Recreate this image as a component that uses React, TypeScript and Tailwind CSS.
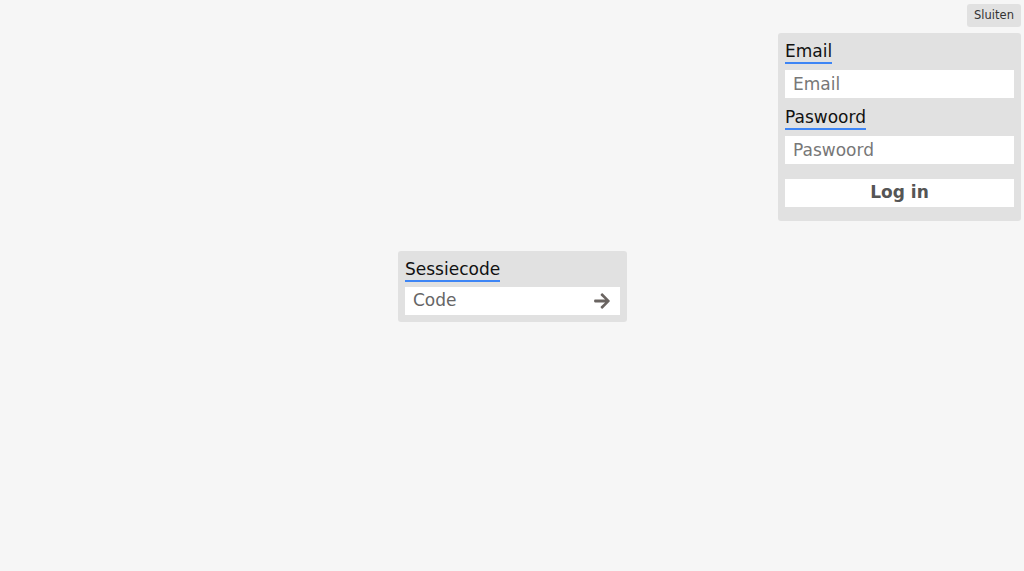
import { useState } from "react";

const font = { fontFamily: '"DejaVu Sans", "Liberation Sans", sans-serif' };

function Label({ children }: { children: string }) {
  return (
    <div>
      <span className="inline-block border-b-2 border-[#3d85f5] text-[17px] leading-[21px] text-[#111]">
        {children}
      </span>
    </div>
  );
}

export default function App() {
  const [code, setCode] = useState("");
  const [email, setEmail] = useState("");
  const [password, setPassword] = useState("");

  return (
    <div className="relative min-h-screen bg-[#f6f6f6]" style={font}>
      {/* login dropdown, top right */}
      <div className="absolute right-[3px] top-[4px] flex w-[243px] flex-col items-end gap-[6px]">
        <button className="h-[23px] w-[54px] rounded-[3px] bg-[#e1e1e1] text-[11.5px] text-[#333]">
          Sluiten
        </button>
        <div className="w-full rounded-[3px] bg-[#e1e1e1] px-[7px] pb-[14px] pt-[7px]">
          <Label>Email</Label>
          <input
            value={email}
            onChange={(e) => setEmail(e.target.value)}
            placeholder="Email"
            className="mt-[6px] block h-[28px] w-full bg-white px-[8px] text-[17px] text-[#333] outline-none placeholder:text-[#777]"
          />
          <div className="mt-[8px]">
            <Label>Paswoord</Label>
          </div>
          <input
            type="password"
            value={password}
            onChange={(e) => setPassword(e.target.value)}
            placeholder="Paswoord"
            className="mt-[6px] block h-[28px] w-full bg-white px-[8px] text-[17px] text-[#333] outline-none placeholder:text-[#777]"
          />
          <button className="mt-[15px] block h-[28px] w-full bg-white text-[17px] font-bold text-[#555]">
            Log in
          </button>
        </div>
      </div>

      {/* session code */}
      <div className="flex min-h-screen items-center justify-center">
        <div className="ml-px mt-[2px] w-[229px] rounded-[3px] bg-[#e1e1e1] p-[7px]">
          <Label>Sessiecode</Label>
          <div className="mt-[5px] flex h-[28px] items-center bg-white pl-[8px] pr-[10px]">
            <input
              value={code}
              onChange={(e) => setCode(e.target.value)}
              placeholder="Code"
              className="min-w-0 flex-1 bg-transparent text-[17px] text-[#333] outline-none placeholder:text-[#666]"
            />
            <svg viewBox="0 0 448 512" className="h-[18px] w-[16px] fill-[#6a6461]">
              <path d="M190.5 66.9l22.2-22.2c9.4-9.4 24.6-9.4 33.9 0L441 239c9.4 9.4 9.4 24.6 0 33.9L246.6 467.3c-9.4 9.4-24.6 9.4-33.9 0l-22.2-22.2c-9.5-9.5-9.300-25 .4-34.3L311.4 296H24c-13.3 0-24-10.7-24-24v-32c0-13.3 10.7-24 24-24h287.4L190.9 101.2c-9.8-9.3-10-24.8-.4-34.300z" />
            </svg>
          </div>
        </div>
      </div>
    </div>
  );
}
